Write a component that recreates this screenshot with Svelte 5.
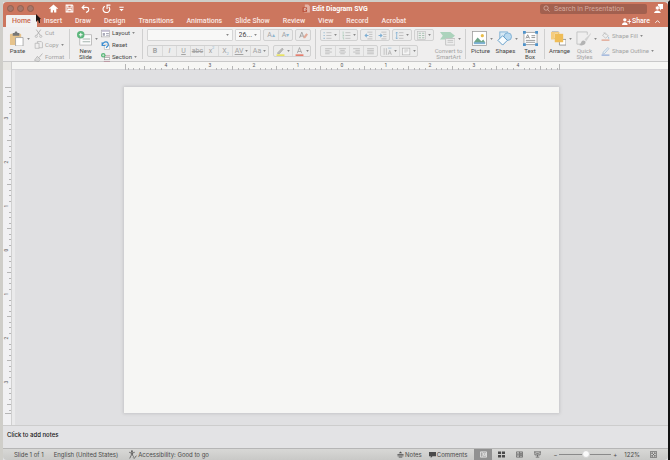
<script>
    let tab = $state('Home');
    let zoom = $state(52);
    let fontName = $state('');
    let fontSize = $state('26...');

    const tabs = ['Home', 'Insert', 'Draw', 'Design', 'Transitions', 'Animations', 'Slide Show', 'Review', 'View', 'Record', 'Acrobat'];

    const line = 'fill="none" stroke="currentColor"';
    const icons = {
        home: '<path d="M0 8l8-7 8 7-1 1-2-1v7H9v-4H7v4H3V8L1 9z" fill="currentColor"/>',
        save: `<path d="M2 2h11l1 1v11H2zM5 2v5h6V2M5 14v-4h6v4" ${line} stroke-width="1.8"/>`,
        undo: `<path d="M6 2L2 6l4 4M2 6h8c5 0 5 6 1 8l-2 1" ${line} stroke-width="2"/>`,
        redo: `<path d="M5 4a6 6 0 1 0 7 1M9 9V2h6" ${line} stroke-width="2"/>`,
        more: '<path d="M3 4h10v2H3zM3 9h10l-5 5z" fill="currentColor"/>',
        doc: '<path d="M5 1h6l3 3v11H4V7h1z" fill="#e3b3a6"/><rect x="1" y="6" width="8" height="8" fill="#b9503a"/><path d="M4 12V8h2c2 0 2 3 0 3H4" fill="none" stroke="#fff"/>',
        search: `<circle cx="7" cy="7" r="5" ${line} stroke-width="1.5"/><path d="M10 10l5 5" ${line} stroke-width="1.5"/>`,
        presence: '<path d="M7 0h9v9h-3l-2 3V9H7z" fill="currentColor"/><circle cx="6" cy="7" r="3.5" fill="currentColor" stroke="#cc765e"/><path d="M0 16c1-6 11-6 12 0z" fill="currentColor"/>',
        share: `<circle cx="5" cy="5" r="3" fill="currentColor"/><path d="M0 14c0-6 10-6 10 0z" fill="currentColor"/><path d="M13 4v8M9.500 8h7" ${line} stroke-width="1.6"/>`,
        up: `<path d="M3 11l5-5 5 5" ${line} stroke-width="2"/>`,
        paste: '<rect x="1" y="3" width="12" height="12" rx="1" fill="#e6c38c"/><path d="M4 5V2h2c0-2 3-2 3 0h2v3z" fill="#777"/><path d="M7 7h8v9H7z" fill="#fff" stroke="#999" stroke-width=".8"/>',
        cut: `<path d="M4 1l7 10M12 1L5 11" ${line} stroke-width="1.3"/><circle cx="4" cy="13" r="2" ${line}/><circle cx="12" cy="13" r="2" ${line}/>`,
        copy: `<path d="M2 4h7v9H2zM6 4V1h7l2 2v9H9" ${line}/>`,
        format: `<path d="M15 1L9 8M6 6l5 5-3 4-7-2z" ${line} stroke-width="1.3"/><path d="M6 7l4 4-2 3-6-1z" fill="#d8d8d8"/>`,
        newSlide: '<rect x="3" y="4" width="12.500" height="11" fill="#fafafa" stroke="#a5a5a5" stroke-width=".7"/><path d="M6 8h8v1H6zM6 11h8v1H6z" fill="#a5b5ae"/><circle cx="4" cy="4" r="4" fill="#5cb67c"/><path d="M4 2v4M2 4h4" stroke="#fff"/>',
        layout: '<rect x="1" y="2" width="14" height="12" fill="#fff" stroke="#999"/><path d="M1 2h14v3H1z" fill="#c3bdd0"/><path d="M3 7h4v5H3zM9 7h5v2H9zM9 10h5v2H9z" fill="#a9a9b8"/>',
        reset: '<path d="M6 7h9v8H6z" fill="#fff" stroke="#aaa"/><path d="M2 2v6h6M2 8c3-9 12-8 11 0l-4 4" fill="none" stroke="#3c8dd0" stroke-width="2"/>',
        section: '<path d="M5 5h11M5 15h11" stroke="#b98f9b" stroke-width="1.5"/><rect x="6" y="8" width="9" height="4" fill="#fff" stroke="#888"/><circle cx="4" cy="4" r="4" fill="#59b578"/><path d="M4 2v4M2 4h4" stroke="#fff"/>',
        bullets: `<path d="M1 3h2M1 8h2M1 13h2" stroke="#8db7d2" stroke-width="2"/><path d="M6 3h9M6 8h9M6 13h9" ${line}/>`,
        numbers: `<path d="M2 1v4M1 7h2v2H1M1 12h2v3" fill="none" stroke="#8dbda0"/><path d="M6 3h9M6 8h9M6 13h9" ${line}/>`,
        outdent: `<path d="M6 2h9M9 6h6M9 10h6M6 14h9" ${line}/><path d="M8 8H2M5 5L2 8l3 3" fill="none" stroke="#7daed3" stroke-width="1.8"/>`,
        indent: `<path d="M6 2h9M9 6h6M9 10h6M6 14h9" ${line}/><path d="M1 8h6M4 5l3 3-3 3" fill="none" stroke="#7daed3" stroke-width="1.8"/>`,
        spacing: `<path d="M3 2v12M1 4l2-2 2 2M1 12l2 2 2-2" fill="none" stroke="#7daed3" stroke-width="1.4"/><path d="M7 3h8M7 8h8M7 13h8" ${line}/>`,
        columns: '<rect x="1" y="1" width="14" height="14" fill="none" stroke="#bbb"/><path d="M3 4h4M9 4h4M3 8h4M9 8h4M3 12h4M9 12h4" stroke="#9bbda7" stroke-width="1.5"/>',
        left: `<path d="M2 3h12M2 6h8M2 9h12M2 12h8" ${line}/>`,
        center: `<path d="M2 3h12M4 6h8M2 9h12M4 12h8" ${line}/>`,
        right: `<path d="M2 3h12M6 6h8M2 9h12M6 12h8" ${line}/>`,
        justify: `<path d="M2 3h12M2 6h12M2 9h12M2 12h12" ${line}/>`,
        direction: `<path d="M2 2v12M6 2v12" ${line}/><path d="M9 14l3-8 3 8M10 11h4" ${line}/><path d="M9 2h6" stroke="#7daed3"/>`,
        alignText: '<rect x="1" y="2" width="13" height="12" fill="#f5f5f5" stroke="#aaa"/><path d="M4 5h7M4 7h7M4 9h4" stroke="#bbb"/>',
        smart: '<path d="M0 1h11l5 4-5 4H0l3-4z" fill="#acd3bc"/><path d="M6 8h10v7H6z" fill="#eee" stroke="#c2c2c2"/><path d="M8 10h6M8 12h6" stroke="#c2c2c2"/>',
        picture: '<rect x=".5" y=".5" width="15" height="15" fill="#fff" stroke="#999" stroke-width=".8"/><path d="M2 12l4-5 4 4 2-2 2 3v1H2z" fill="#6fa58a"/><circle cx="11" cy="5" r="1.7" fill="#e9bd4a"/><path d="M2 13h12" stroke="#7fb2d6" stroke-width="2"/>',
        shapes: '<rect x="3" y="1" width="8" height="8" fill="#d7e9f5" stroke="#7fb0d4"/><circle cx="11.500" cy="6" r="4" fill="#b9d9ef" stroke="#7fb0d4"/><path d="M6 5l5 5-5 5-5-5z" fill="#f7fbfd" stroke="#5d9ac8"/>',
        textbox: '<rect x="1" y="1.500" width="14" height="13" fill="#fff" stroke="#a5a5a5"/><path d="M3 8l2-4 2 4M4 7h2M9 5h4M9 7h4M3 10h10M3 12h10" fill="none" stroke="#777" stroke-width=".8"/><path d="M0 0h3v3H0zM13 0h3v3h-3zM0 13h3v3H0zM13 13h3v3h-3z" fill="#4f93cb"/>',
        arrange: '<path d="M1 1h7v7H1z" fill="#fff" stroke="#999"/><path d="M9 9h7v6H9z" fill="#fff" stroke="#999"/><path d="M4 3h9v9H4z" fill="#efbd58"/><path d="M0 1h9v2H4v6H0z" fill="#f4cd80"/>',
        quick: '<path d="M12 1H1v13h6M12 1v3" fill="none" stroke="#c2c2c2"/><path d="M16 2l-7 7 2 2 5-8z" fill="#d2d2d2"/><path d="M8 10c-3 0-2 4-5 5 4 1 8 0 7-4z" fill="#b3b3b3"/>',
        fill: '<path d="M7 1l6 6-5 4-5-5zM5 1l4 4" fill="#eee" stroke="#aaa"/><path d="M13 8l2 3-2 1z" fill="#7daed3"/><path d="M1 13h14v3H1z" fill="#e4b3a3"/>',
        outline: '<path d="M12 1l2 2-8 9-3 1 1-4z" fill="#e7eef5" stroke="#8dacc8"/><path d="M1 13h14v3H1z" fill="#a9bddf"/>',
        eraser: '<path d="M1 12L5 2l4 10M2 9h5" fill="none" stroke="#8d8d8d" stroke-width="1.3"/><path d="M8 10l5-6 3 2-5 7H8z" fill="#e2aa98"/>',
        pen: '<path d="M3 10l8-8 2 2-7 8H3z" fill="#bbb" stroke="#999"/><path d="M1 13h14v3H1z" fill="#e8e264"/>',
        fontColor: '<path d="M4 11L8 1l4 10M5 8h6" fill="none" stroke="#999" stroke-width="1.3"/><path d="M1 13h14v3H1z" fill="#e47e6e"/>',
        access: `<circle cx="7" cy="2" r="1.5" fill="currentColor"/><path d="M2 4l3 1h4l3-1M6 5v4l-3 6M8 5v4l2 3M9 13l2 2 4-5" ${line} stroke-width="1.3"/>`,
        notes: '<path d="M8 1l4 4H4zM1 7h14v1.5H1zM1 10h14v2H1zM4 13h8v2H4z" fill="currentColor"/>',
        comment: '<path d="M0 2h16v10H8l-4 4v-4H0z" fill="currentColor"/>',
        normal: `<path d="M1 2h14v12H1zM5 2v12M8 5h5v4H8zM7 11h7" ${line} stroke-width="1.5"/>`,
        sorter: '<path d="M0 1h7v6H0zM9 1h7v6H9zM0 9h7v6H0zM9 9h7v6H9z" fill="currentColor"/>',
        reading: `<path d="M1 2h14v12H1zM8 2v12M3 6h3M3 8h3M3 10h3M10 5h3v6h-3z" ${line} stroke-width="1.4"/>`,
        show: `<path d="M0 2h16M2 2v7h12V2M5 6h6M8 9v4M4 14h8" ${line} stroke-width="1.5"/>`,
        fit: `<path d="M1 1h14v14H1zM4 7V4h3M9 4h3v3M12 9v3H9M7 12H4V9M5 5l6 6M11 5l-6 6" ${line} stroke-width="1.3"/>`
    };

    const inch = 44;
    const hTicks = Array.from({ length: 79 }, (_, i) => i - 39);
    const vTicks = Array.from({ length: 59 }, (_, i) => i - 29);
    const tickPos = (mid, i) => mid + Math.round((i * inch) / 8);
</script>

{#snippet icon(name, size = 's')}
    <svg class="icon {size}" viewBox="0 0 16 16" aria-hidden="true">{@html icons[name]}</svg>
{/snippet}

{#snippet caret()}
    <svg class="caret" viewBox="0 0 4 3" aria-hidden="true"><path d="M0 0h4L2 3z" fill="currentColor" /></svg>
{/snippet}

{#snippet big(name, label, menu = true, off = false)}
    <button class="big" class:off>
        <span class="big-icon" class:menu>{@render icon(name, 'l')}{#if menu}{@render caret()}{/if}</span>
        <span class="big-label">{label}</span>
    </button>
{/snippet}

{#snippet row(name, label, menu = true, off = false)}
    <button class="row" class:off>
        {@render icon(name, 'm')}<span>{label}</span>{#if menu}{@render caret()}{/if}
    </button>
{/snippet}

{#snippet tool(name, menu = false)}
    <button class="tool" class:menu aria-label={name}>{@render icon(name, 'm')}{#if menu}{@render caret()}{/if}</button>
{/snippet}

<div class="window">
    <header>
        <div class="titlebar">
            <div class="side">
                <div class="lights">
                    <button aria-label="Close"></button>
                    <button aria-label="Minimize"></button>
                    <button aria-label="Full screen"></button>
                </div>
                <div class="quick">
                    <button aria-label="Home">{@render icon('home', 'm')}</button>
                    <button aria-label="Save">{@render icon('save', 'm')}</button>
                    <button aria-label="Undo">{@render icon('undo', 'm')}{@render caret()}</button>
                    <button aria-label="Redo">{@render icon('redo', 'm')}</button>
                    <button aria-label="Customize">{@render icon('more')}</button>
                </div>
            </div>
            <div class="title">{@render icon('doc', 'm')}<span>Edit Diagram SVG</span></div>
            <div class="side end">
                <label class="search">
                    {@render icon('search')}
                    <input type="search" placeholder="Search in Presentation" aria-label="Search in Presentation" />
                </label>
                <button aria-label="Account">{@render icon('presence', 'm')}</button>
            </div>
        </div>
        <nav>
            {#each tabs as name}
                <button class="tab" class:active={tab === name} onclick={() => (tab = name)}>{name}</button>
            {/each}
            <button class="share">{@render icon('share', 'm')}Share</button>
            <button class="collapse" aria-label="Collapse ribbon">{@render icon('up')}</button>
        </nav>
        <svg class="pointer" viewBox="0 0 5 9" aria-hidden="true"><path d="M0 0v8l2-2 1 3h1V5h1z" fill="#1c1413" /></svg>
    </header>

    <div class="ribbon">
        <div class="group clipboard">
            {@render big('paste', 'Paste')}
            <div class="rows">
                {@render row('cut', 'Cut', false, true)}
                {@render row('copy', 'Copy', true, true)}
                {@render row('format', 'Format', false, true)}
            </div>
        </div>
        <div class="group slides">
            {@render big('newSlide', 'New\nSlide')}
            <div class="rows">
                {@render row('layout', 'Layout')}
                {@render row('reset', 'Reset', false)}
                {@render row('section', 'Section')}
            </div>
        </div>
        <div class="group font">
            <div class="line">
                <div class="combo">
                    <select bind:value={fontName} aria-label="Font"><option value=""></option></select>{@render caret()}
                </div>
                <div class="combo size">
                    <select bind:value={fontSize} aria-label="Font size"><option>26...</option></select>{@render caret()}
                </div>
                <div class="cluster">
                    <button class="tool" aria-label="Grow font">A<i class="mark">▴</i></button>
                    <button class="tool" aria-label="Shrink font">A<i class="mark">▾</i></button>
                </div>
                <div class="cluster">{@render tool('eraser')}</div>
            </div>
            <div class="line">
                <div class="cluster">
                    <button class="tool"><b>B</b></button>
                    <button class="tool"><i>I</i></button>
                    <button class="tool"><u>U</u></button>
                    <button class="tool"><s>abc</s></button>
                    <button class="tool">x<sup>2</sup></button>
                    <button class="tool">X<sub>2</sub></button>
                    <button class="tool menu"><u>AV</u>{@render caret()}</button>
                    <button class="tool menu">Aa{@render caret()}</button>
                </div>
                <div class="cluster">{@render tool('pen', true)}{@render tool('fontColor', true)}</div>
            </div>
        </div>
        <div class="group para">
            <div class="lines">
                <div class="line">
                    <div class="cluster">{@render tool('bullets', true)}{@render tool('numbers', true)}</div>
                    <div class="cluster">{@render tool('outdent')}{@render tool('indent')}</div>
                    <div class="cluster">{@render tool('spacing', true)}</div>
                    <div class="cluster">{@render tool('columns', true)}</div>
                </div>
                <div class="line">
                    <div class="cluster">{@render tool('left')}{@render tool('center')}{@render tool('right')}{@render tool('justify')}</div>
                    <div class="cluster">{@render tool('direction', true)}{@render tool('alignText', true)}</div>
                </div>
            </div>
            {@render big('smart', 'Convert to\nSmartArt', true, true)}
        </div>
        <div class="group insert">
            {@render big('picture', 'Picture')}
            {@render big('shapes', 'Shapes')}
            {@render big('textbox', 'Text\nBox', false)}
        </div>
        <div class="group arrange">
            {@render big('arrange', 'Arrange')}
            {@render big('quick', 'Quick\nStyles', true, true)}
            <div class="rows">
                {@render row('fill', 'Shape Fill', true, true)}
                {@render row('outline', 'Shape Outline', true, true)}
            </div>
        </div>
    </div>

    <main>
        <div class="corner"></div>
        <div class="hruler">
            <svg width="435" height="8" aria-hidden="true">
                {#each hTicks as i}
                    {#if i % 8 === 0}
                        <text x={tickPos(217, i)} y="5">{Math.abs(i / 8)}</text>
                    {:else}
                        <path d="M{tickPos(217, i)}.5 {i % 4 === 0 ? 4 : 6}v{i % 4 === 0 ? 4 : 2}" />
                    {/if}
                {/each}
                <path d="M.5 2v6M434.5 2v6" />
            </svg>
        </div>
        <div class="vruler">
            <svg width="8" height="327" aria-hidden="true">
                {#each vTicks as i}
                    {#if i % 8 === 0}
                        <text transform="translate(5 {tickPos(163, i)}) rotate(-90)">{Math.abs(i / 8)}</text>
                    {:else}
                        <path d="M{i % 4 === 0 ? 4 : 6} {tickPos(163, i)}.5h{i % 4 === 0 ? 4 : 2}" />
                    {/if}
                {/each}
                <path d="M2 .5h6M2 326.5h6" />
            </svg>
        </div>
        <div class="canvas"><div class="slide"></div></div>
    </main>

    <section class="notes">Click to add notes</section>

    <footer>
        <span>Slide 1 of 1</span>
        <button>English (United States)</button>
        <button>{@render icon('access', 'm')}Accessibility: Good to go</button>
        <div class="views">
            <button>{@render icon('notes')}Notes</button>
            <button>{@render icon('comment')}Comments</button>
            <div class="modes">
                <button class="on" aria-label="Normal">{@render icon('normal')}</button>
                <button aria-label="Slide sorter">{@render icon('sorter')}</button>
                <button aria-label="Reading view">{@render icon('reading')}</button>
                <button aria-label="Slide show">{@render icon('show')}</button>
            </div>
            <div class="zoom">
                <button aria-label="Zoom out">−</button>
                <input type="range" min="0" max="100" bind:value={zoom} aria-label="Zoom" />
                <button aria-label="Zoom in">+</button>
            </div>
            <span class="percent">122%</span>
            <button aria-label="Fit slide">{@render icon('fit')}</button>
        </div>
    </footer>
</div>

<style>
    :global(body) { background: #dededb; }

    .window {
        box-sizing: border-box;
        min-height: 100vh;
        display: flex;
        flex-direction: column;
        border: solid #cfcec9;
        border-width: 2px 2px 0 3px;
        border-right-color: #111;
        background: #e2e2e4;
        color: #444;
        font: 6px/8px Roboto, "Liberation Sans", sans-serif;
    }
    button, input, select { font: inherit; color: inherit; background: none; border: 0; padding: 0; margin: 0; }
    button { display: flex; align-items: center; white-space: nowrap; }
    .icon { flex: none; width: 7px; height: 7px; }
    .icon.m { width: 9px; height: 9px; }
    .icon.l { width: 15px; height: 15px; }
    .caret { flex: none; width: 3px; height: 2px; color: #888; }

    header { position: relative; background: #cc765e; color: #fff; border-radius: 4px 4px 0 0; }
    .titlebar { display: flex; align-items: center; height: 13px; padding: 0 5px 0 4px; }
    .side { flex: 1; display: flex; align-items: center; gap: 15px; }
    .side.end { justify-content: flex-end; gap: 7px; }
    .lights { display: flex; gap: 3px; }
    .lights button { width: 7px; height: 7px; border-radius: 50%; background: #a6776b; border: 1px solid #94604f; box-sizing: border-box; }
    .quick { display: flex; align-items: center; gap: 7px; }
    .quick .caret { color: #f0d3ca; margin-left: 2px; }
    .title { display: flex; align-items: center; gap: 1px; font-size: 7px; font-weight: 700; }
    .search { display: flex; align-items: center; gap: 4px; width: 104px; height: 10px; padding-left: 3px; border-radius: 2px; background: #a2604f; color: #e2bfb5; }
    .search input { width: 90px; font-size: 7px; outline: 0; appearance: none; }
    .search input::placeholder { color: #d5aa9e; }

    nav { display: flex; align-items: stretch; height: 12px; padding: 0 7px 0 3px; font-size: 7px; font-weight: 500; }
    .tab { padding: 0 6px; margin-right: 1px; color: #fbe9e4; }
    .tab.active { background: #f2f1f0; color: #c9684d; border-radius: 1px 1px 0 0; }
    .share { margin-left: auto; gap: 1px; }
    .collapse { margin-left: 4px; }
    .pointer { position: absolute; left: 33px; top: 12px; width: 5px; height: 9px; }

    .ribbon { display: flex; height: 34px; background: #efeeee; border-bottom: 1px solid #c9c9c9; }
    .group { box-sizing: border-box; flex: none; display: flex; margin: 2px 0; padding: 0 4px; border-right: 1px solid #cfcfcf; }
    .group:last-child { border: 0; }
    .clipboard { width: 67px; gap: 4px; padding-left: 2px; }
    .slides { width: 73px; gap: 3px; padding-left: 3px; }
    .font { width: 173px; flex-direction: column; gap: 4px; }
    .para { width: 150px; padding-right: 2px; }
    .insert { width: 79px; padding: 0 2px; }
    .arrange { padding-left: 2px; }

    .big { flex-direction: column; width: 25px; padding-top: 2px; text-align: center; }
    .big-icon { display: flex; align-items: center; gap: 3px; }
    .big-icon.menu { margin-left: 4px; }
    .big-label { font-size: 6px; line-height: 6px; white-space: pre; margin-top: 2px; }
    .off { color: #a3a3a3; }
    .para .big { width: 35px; }
    .rows { display: flex; flex-direction: column; gap: 4px; }
    .row { gap: 2px; height: 8px; }
    .arrange .rows { gap: 7px; padding-top: 3px; margin-left: 4px; }

    .line { display: flex; gap: 2px; }
    .lines { display: flex; flex-direction: column; gap: 4px; }
    .combo { box-sizing: border-box; display: flex; align-items: center; width: 88px; height: 12px; padding: 0 3px; background: #f8f8f7; border: 1px solid #d5d5d5; border-radius: 1px; }
    .combo select { flex: 1; min-width: 0; appearance: none; outline: 0; font-size: 7px; line-height: 8px; }
    .combo.size { width: 27px; }
    .cluster { display: flex; border: 1px solid #d1d1d1; border-radius: 2px; background: #ececec; color: #a3a3a3; }
    .tool { justify-content: center; width: 14px; height: 10px; font-size: 7px; }
    .tool + .tool { border-left: 1px solid #dadada; }
    .tool.menu { width: 18px; gap: 2px; }
    .font .line { justify-content: space-between; }
    .font .line:last-child .tool { width: 14px; }
    .font .line:last-child .tool.menu { width: 18px; }
    .mark { color: #8db7d2; font-style: normal; font-size: 6px; }
    sup, sub { font-size: 4px; line-height: 4px; color: #8db7d2; }
    sup { align-self: flex-start; }
    sub { align-self: flex-end; }

    main { flex: 1; display: grid; grid-template: 8px 1fr / 9px 1fr; }
    .corner { background: #e9e8e4; border-right: 1px solid #cfcfcf; }
    .hruler { display: flex; justify-content: center; padding-left: 4px; background: #f6f6f4; border-bottom: 1px solid #d5d5d8; }
    .vruler { display: flex; align-items: center; padding-top: 5px; background: #f1f1f3; border-right: 1px solid #d0d0d0; }
    svg text { font-size: 5px; fill: #555; text-anchor: middle; }
    .hruler path, .vruler path { stroke: #b5b5b5; fill: none; }
    .canvas { display: flex; align-items: center; justify-content: center; padding: 9px 0 4px; border-left: 3px solid #eaeaeb; background: #e0e0e2; box-sizing: border-box; }
    .slide { width: 435px; aspect-ratio: 4 / 3; background: #f6f6f4; box-shadow: 0 0 3px 1px #c6c6c8; }

    .notes { box-sizing: border-box; height: 23px; padding: 5px 4px; border-top: 1px solid #cdcdcd; background: #e3e3e5; color: #111; font-family: Inter, sans-serif; font-weight: 500; }
    footer { box-sizing: border-box; display: flex; align-items: center; gap: 10px; height: 12px; padding: 0 11px; border-top: 1px solid #b6b6b6; background: linear-gradient(#d8d8d6, #c9c9c7); color: #4a4a4a; border-radius: 0 0 4px 4px; font-family: Inter, sans-serif; }
    footer button { gap: 1px; }
    .views { display: flex; align-items: center; gap: 7px; margin-left: auto; }
    .modes { display: flex; }
    .modes button { justify-content: center; width: 18px; height: 11px; }
    .modes .on { background: #919191; color: #fff; }
    .zoom { display: flex; align-items: center; gap: 2px; }
    .zoom input { width: 52px; height: 9px; appearance: none; outline: 0; }
    .zoom input::-webkit-slider-runnable-track { height: 1px; background: #8a8a8a; }
    .zoom input::-webkit-slider-thumb { appearance: none; width: 8px; height: 8px; margin-top: -4px; border-radius: 50%; background: #fafafa; border: 1px solid #d2d2d2; }
    .percent { margin-right: 3px; }
</style>
